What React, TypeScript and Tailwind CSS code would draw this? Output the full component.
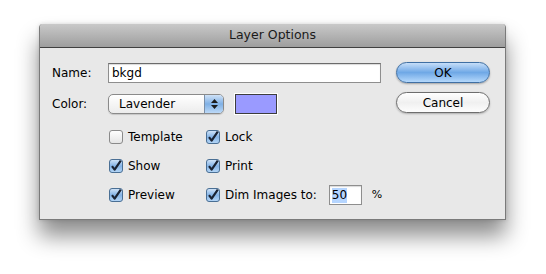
import React from 'react';

const Check: React.FC<{ on?: boolean }> = ({ on }) => (
  <svg width="14" height="14" viewBox="0 0 14 14" className="shrink-0">
    <defs>
      <linearGradient id="cbOn" x1="0" y1="0" x2="0" y2="1">
        <stop offset="0" stopColor="#d4e6f9" />
        <stop offset="0.5" stopColor="#84b3e6" />
        <stop offset="1" stopColor="#b6d7f7" />
      </linearGradient>
      <linearGradient id="cbOff" x1="0" y1="0" x2="0" y2="1">
        <stop offset="0" stopColor="#ffffff" />
        <stop offset="1" stopColor="#e4e4e4" />
      </linearGradient>
    </defs>
    <rect x="0.5" y="0.5" width="13" height="13" rx="2.5" fill={on ? 'url(#cbOn)' : 'url(#cbOff)'} stroke={on ? '#4a6f94' : '#8a8a8a'} />
    {on && <path d="M3 7.2 L5.6 10.6 L11.8 1.6" fill="none" stroke="#1a2333" strokeWidth="2.2" strokeLinejoin="round" />}
  </svg>
);

const Box: React.FC<{ on?: boolean; label: string; w?: string }> = ({ on, label, w }) => (
  <div className={`flex items-center gap-[5px] ${w ?? ''}`}>
    <Check on={on} />
    <span>{label}</span>
  </div>
);

export default function App() {
  return (
    <div className="h-[274px] w-[546px] bg-white pl-[39px] pt-[24px] font-['DejaVu_Sans',sans-serif] text-[12px] text-black">
      <div className="w-[467px] overflow-hidden rounded-t-[4px] border-x border-b border-[#7a7a7a] bg-[#e8e8e8] shadow-[0_16px_22px_rgba(0,0,0,0.45),0_0_4px_rgba(0,0,0,0.15)]">
        {/* title bar */}
        <div className="flex h-[24px] items-center justify-center border-b border-[#404040] bg-gradient-to-b from-[#c9c9c9] to-[#9e9e9e] text-[12.5px] text-[#1a1a1a]">
          Layer Options
        </div>

        <div className="flex justify-between pb-[17px] pl-[12px] pr-[15px] pt-[14px]">
          <div className="flex flex-col">
            <div className="flex h-[21px] items-center">
              <span className="w-[44px]">Name:</span>
              <div className="ml-[12px] flex h-[20px] w-[273px] items-center border border-[#8e8e8e] border-t-[#6b6b6b] bg-white pl-[3px] shadow-[inset_0_1px_1px_rgba(0,0,0,0.15)]">
                bkgd
              </div>
            </div>
            <div className="mt-[10px] flex h-[21px] items-center">
              <span className="w-[44px]">Color:</span>
              <div className="ml-[12px] flex h-[20px] w-[116px] items-stretch overflow-hidden rounded-[5px] border border-[#8a8a8a] bg-gradient-to-b from-white to-[#ececec] shadow-[0_1px_1px_rgba(0,0,0,0.15)]">
                <span className="flex-1 pl-[10px] leading-[18px]">Lavender</span>
                <div className="flex w-[19px] flex-col items-center justify-center gap-[2px] border-l border-[#7a8fa8] bg-gradient-to-b from-[#cfe2f7] via-[#7fb0e5] to-[#bcd9f7]">
                  <svg width="7" height="4" viewBox="0 0 7 4"><path d="M0 4 L3.5 0 L7 4 Z" fill="#1b1b1b" /></svg>
                  <svg width="7" height="4" viewBox="0 0 7 4"><path d="M0 0 L3.5 4 L7 0 Z" fill="#1b1b1b" /></svg>
                </div>
              </div>
              <div className="ml-[11px] h-[20px] w-[42px] border border-[#3d3d3d] bg-[#9a9aff] outline outline-1 outline-white" />
            </div>

            <div className="ml-[57px] mt-[16px] flex flex-col gap-[15px]">
              <div className="flex h-[14px] items-center">
                <Box label="Template" w="w-[97px]" />
                <Box on label="Lock" />
              </div>
              <div className="flex h-[14px] items-center">
                <Box on label="Show" w="w-[97px]" />
                <Box on label="Print" />
              </div>
              <div className="flex h-[14px] items-center">
                <Box on label="Preview" w="w-[97px]" />
                <Box on label="Dim Images to:" />
                <div className="ml-[12px] flex h-[20px] w-[33px] items-center border border-[#8e8e8e] bg-white pl-[2px] shadow-[inset_0_1px_1px_rgba(0,0,0,0.15)]">
                  <span className="bg-[#b5d5ff] leading-[15px]">50</span>
                </div>
                <span className="ml-[10px] text-[11px]">%</span>
              </div>
            </div>
          </div>

          <div className="flex flex-col gap-[9px]">
            <button className="flex h-[21px] w-[94px] items-center justify-center rounded-full border border-[#3f6fa3] bg-gradient-to-b from-[#c6def8] via-[#6fa8e6] to-[#b4d8fb] shadow-[0_1px_2px_rgba(0,0,0,0.3)]">
              OK
            </button>
            <button className="flex h-[21px] w-[94px] items-center justify-center rounded-full border border-[#6e6e6e] bg-gradient-to-b from-white via-[#f0f0f0] to-[#fdfdfd] shadow-[0_1px_2px_rgba(0,0,0,0.25)]">
              Cancel
            </button>
          </div>
        </div>
      </div>
    </div>
  );
}
